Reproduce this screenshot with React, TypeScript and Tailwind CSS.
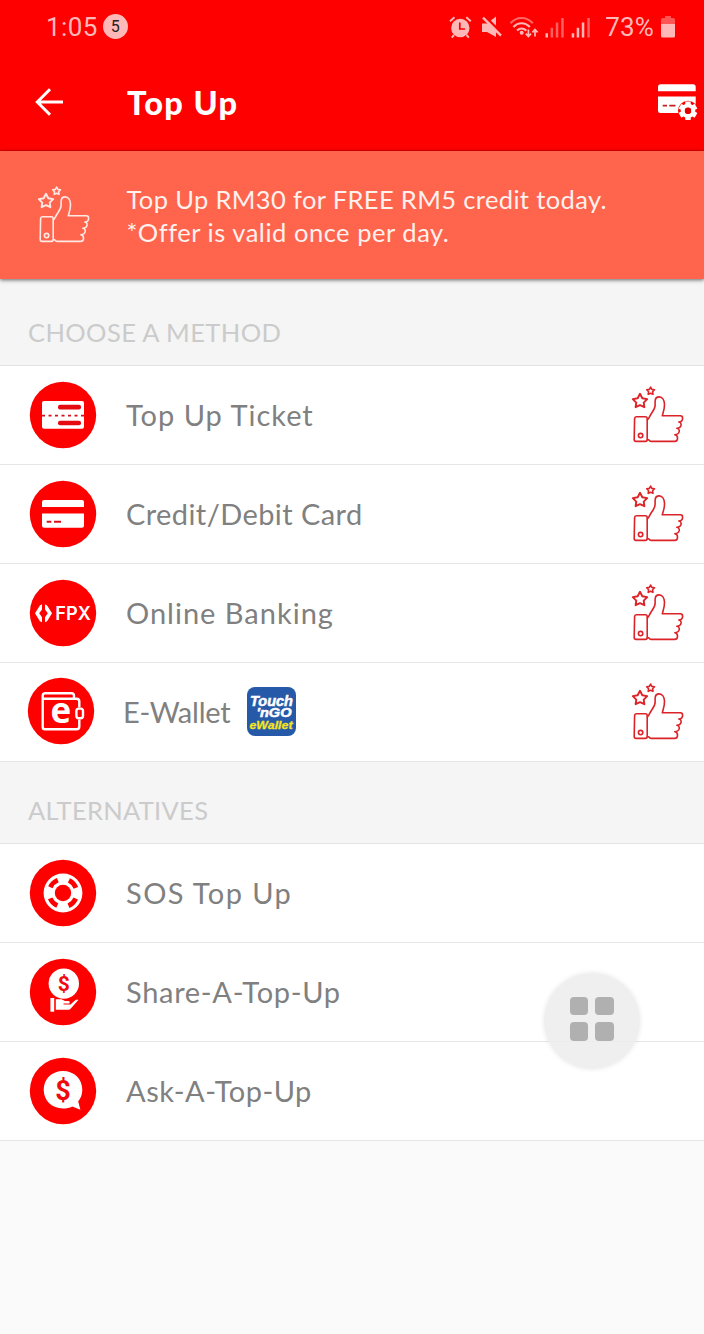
import type { ReactNode } from 'react';
import clsx from 'clsx';

type Method = {
  label: string;
  icon: ReactNode;
  tracking: string;
  promo?: boolean;
  wallet?: boolean;
};

function ThumbIcon({ className }: { className?: string }) {
  return (
    <svg viewBox="0 0 56 60" className={clsx('h-[60px] w-14 shrink-0', className)} fill="none" stroke="currentColor" strokeWidth="1.6" strokeLinejoin="round" strokeLinecap="round">
      <path strokeWidth="1.9" d="M10 9.8 12.3 14.3 17.2 15.1 13.7 18.6 14.4 23.2 10 21.1 5.6 23.2 6.3 18.6 2.8 15.1 7.7 14.3Z" />
      <path d="M20.6 3 21.8 5.4 24.5 5.8 22.6 7.7 23 10.4 20.6 9.2 18.2 10.4 18.6 7.7 16.7 5.8 19.4 5.4Z" />
      <path d="M6.3 32.8H15.4Q17.2 32.8 17.2 34.8V55.6Q17.2 57.4 15.4 57.4H6Q4.2 57.4 4.2 55.6L4.6 34.6Q4.7 32.8 6.3 32.8Z" />
      <circle cx="10.6" cy="51.6" r="2.2" />
      <path d="M17.4 35.8C19 34.5 19.3 32.6 21.4 29.5C23.6 26.3 25.1 24.5 25.1 21.5V17.5C25.1 14.5 26.8 12.9 29.3 12.9C32.3 12.9 34.2 16.3 34.5 20C34.8 24.5 33.3 28 32.3 31.8H50.4Q52.6 31.8 52.6 34.2C52.6 36.5 51.4 37.8 48.8 38C52.2 38.5 52.2 44 46.8 44.3C50.3 44.6 50.5 50.4 44.8 50.7C48.4 51.1 48.5 57.4 44.7 57.4H20.9Q19.5 57.2 18.9 55.9L17.5 55.4" />
    </svg>
  );
}

function Disc({ children }: { children: ReactNode }) {
  return (
    <svg viewBox="0 0 68 68" className="h-[68px] w-[68px] shrink-0" fill="white">
      <circle cx="34" cy="34" r="33.2" fill="#ff0000" />
      {children}
    </svg>
  );
}

const ticket = (
  <Disc>
    <rect x="13" y="20" width="42" height="27.7" rx="2" />
    <g fill="#e60b10">
      <rect x="29" y="23.8" width="23" height="4.6" rx="2" />
      <rect x="29" y="39.7" width="23" height="4.6" rx="2" />
    </g>
    <path d="M13 34.7H55" stroke="#d8101a" strokeWidth="1.8" strokeDasharray="3 3.5" />
  </Disc>
);

const card = (
  <Disc>
    <path d="M13 27V22Q13 20 15 20H53Q55 20 55 22V27Z" />
    <path d="M13 33.4H55V45.7Q55 47.7 53 47.7H15Q13 47.7 13 45.7Z" />
    <path d="M17.7 41.8H22.3M25 41.8H32" stroke="#d8101a" strokeWidth="2" />
  </Disc>
);

const fpx = (
  <Disc>
    <path d="M13 25.3V30.4L10.2 34.3 13 38.2V43.3L10.9 42.2 6 34.3 10.9 26.4Z" />
    <path d="M16 25.3V30.4L18.8 34.3 16 38.2V43.3L18.1 42.2 23 34.3 18.1 26.4Z" />
    <text x="26.3" y="41.4" fontSize="18.5" fontWeight="600" textLength="35.5" lengthAdjust="spacingAndGlyphs" className="font-['Inter',sans-serif]">FPX</text>
  </Disc>
);

const ewallet = (
  <Disc>
    <g fill="none" stroke="white" strokeWidth="2.4" strokeLinejoin="round">
      <path d="M15.7 21.7V50Q15.7 52.3 18 52.3H49.5Q52.3 52.3 52.3 49.5V42.5M52.3 30.5V24.5Q52.3 21.7 49.5 21.7H15.7V18.8Q15.7 16.2 18.3 16.2H44.5Q47 16.2 47 18.8V21.7" />
      <rect x="49.4" y="31.6" width="6.6" height="9.6" rx="2.4" />
    </g>
    <text x="33.8" y="46.2" fontSize="35" fontWeight="700" textAnchor="middle" className="font-['Open_Sans',sans-serif]">e</text>
  </Disc>
);

const sos = (
  <Disc>
    <circle cx="34" cy="34" r="19.4" />
    <circle cx="34" cy="34" r="8.2" fill="#ff0000" />
    <circle cx="34" cy="34" r="13.9" fill="none" stroke="#ff0000" strokeWidth="4.8" strokeDasharray="10.4 11.434" transform="rotate(23.6 34 34)" />
  </Disc>
);

const share = (
  <Disc>
    <circle cx="34.8" cy="25.6" r="15.2" />
    <text x="34.8" y="32.9" fontSize="21" fontWeight="700" textAnchor="middle" fill="#ee0a0e" className="font-['Roboto',sans-serif]">$</text>
    <path d="M21.4 40H25.2V53.7H21.4Z" />
    <path d="M26.8 41.2H32.5L36 43H40Q41.6 44 40.2 45.5H34.5V46.5H41.5L46.6 42Q48.4 40.9 49.3 42L41.8 50.6Q40.8 51.8 39.3 51.8H26.8Z" />
  </Disc>
);

const ask = (
  <Disc>
    <path d="M34 14C45 14 53.3 22 53.3 32.8C53.3 38 51.5 41.5 49.2 44.5L51.4 52.8L43.3 49.4C40.5 50.8 37.5 51.5 34 51.5C23 51.5 14.7 43.6 14.7 32.8C14.7 22 23 14 34 14Z" />
    <text x="34" y="43" fontSize="27" fontWeight="700" textAnchor="middle" fill="#ee0a0e" className="font-['Roboto',sans-serif]">$</text>
  </Disc>
);

const methods: Method[] = [
  { label: 'Top Up Ticket', icon: ticket, tracking: 'tracking-[1px]', promo: true },
  { label: 'Credit/Debit Card', icon: card, tracking: 'tracking-[0.42px]', promo: true },
  { label: 'Online Banking', icon: fpx, tracking: 'tracking-[1px]', promo: true },
  { label: 'E-Wallet', icon: ewallet, tracking: 'tracking-[-0.2px]', promo: true, wallet: true },
];

const alternatives: Method[] = [
  { label: 'SOS Top Up', icon: sos, tracking: 'tracking-[1.4px]' },
  { label: 'Share-A-Top-Up', icon: share, tracking: 'tracking-[0.7px]' },
  { label: 'Ask-A-Top-Up', icon: ask, tracking: 'tracking-[0.5px]' },
];

function TouchNGoBadge() {
  return (
    <svg viewBox="0 0 49 49" className="-mt-px ml-4 h-[49px] w-[49px] shrink-0 font-['Liberation_Sans',sans-serif]" fontStyle="italic" fontWeight="700">
      <rect width="49" height="49" rx="8" fill="#265aa9" />
      <g fill="white" stroke="white" strokeWidth="0.5">
        <text x="3" y="18.8" fontSize="14.5" textLength="43" lengthAdjust="spacingAndGlyphs">Touch</text>
        <text x="9.5" y="30" fontSize="12.5" textLength="35" lengthAdjust="spacingAndGlyphs">'nGO</text>
      </g>
      <text x="2.5" y="42.3" fontSize="10.5" fill="#f6e51c" stroke="#f6e51c" strokeWidth="0.3" textLength="43" lengthAdjust="spacingAndGlyphs">eWallet</text>
    </svg>
  );
}

function StatusIcons() {
  return (
    <svg viewBox="0 0 144 30" className="h-[30px] w-36" fill="#ffb8b8">
      {/* alarm */}
      <circle cx="12.3" cy="16" r="9.2" />
      <path d="M6 23 3.8 25.6M18.6 23 20.8 25.6M2 9.2 6.5 5.3M22.8 9.2 18.3 5.3" stroke="#ffb8b8" strokeWidth="2" />
      <path d="M11.8 10.5V17H17" stroke="#ff0000" strokeWidth="1.7" fill="none" />
      {/* muted speaker */}
      <path d="M34 11.5H39L48 4.5V25L39 20H34Z" />
      <path d="M37 4.6 55.5 23" stroke="#ff0000" strokeWidth="2.6" />
      <path d="M35 5.6 53 23.6" stroke="#ffb8b8" strokeWidth="2.4" />
      {/* wifi */}
      <g fill="none" strokeWidth="2.1">
        <path d="M62.5 11.3C68.5 4.2 78.5 4.2 84.8 11.3" stroke="#ff6868" />
        <path d="M65.5 15C70 10 77 10 81.8 15M69 18.6C72 15.8 75.2 15.8 78.4 18.6" stroke="#ffb8b8" />
      </g>
      <circle cx="73.7" cy="20.8" r="2" />
      <path d="M80.4 17.5V24M77.8 21.7 80.4 24.5 83 21.7M87 24.5V18M84.4 20.3 87 17.5 89.6 20.3" fill="none" stroke="#ffb8b8" strokeWidth="1.7" />
      {/* signal bars */}
      <path d="M97.5 21.2h2.5v4.3h-2.5zM123.7 21.2h2.5v4.3h-2.5zM128.7 15.8h2.5v9.7h-2.5zM133.8 10.5h2.5v15h-2.5z" />
      <path d="M102.6 15.8h2.5v9.7h-2.5zM107.8 10.5h2.5v15h-2.5zM113.2 6h2.5v19.5h-2.5zM139.3 6h2.5v19.5h-2.5z" fill="#ff6060" />
    </svg>
  );
}

function CardSettingsIcon() {
  return (
    <svg viewBox="0 0 42 38" className="-mt-[2px] h-[38px] w-[42px]" fill="white">
      <path d="M1 9.2V5Q1 2.3 3.7 2.3H36Q38.7 2.3 38.7 5V9.2Z" />
      <path d="M1 14.6H38.7V31H3.5Q1 31 1 28.5Z" />
      <path d="M5.7 23.7H10M12.3 23.7H18.5" stroke="#c82020" strokeWidth="1.7" />
      <path d="M24 31H20V33H38V38H42V22H39V31Z" fill="#ff0000" />
      <circle cx="31" cy="28.8" r="10" fill="#ff0000" />
      <circle cx="31" cy="28.8" r="5.2" fill="none" stroke="white" strokeWidth="4.2" />
      <g stroke="white" strokeWidth="5.4">
        <path d="M31 19.6V24M31 33.6V38M23 24.2 26.8 26.4M35.2 31.2 39 33.4M23 33.4 26.8 31.2M35.2 26.4 39 24.2" />
      </g>
      <circle cx="31" cy="28.8" r="3.2" fill="#e00000" />
    </svg>
  );
}

function SectionTitle({ children, className }: { children: ReactNode; className: string }) {
  return (
    <h2 className={clsx('flex items-end border-b border-[#e3e3e3] bg-[#f5f5f5] pb-[17px] pl-7 text-[25.5px] leading-8 text-[#cbcbcb]', className)}>
      {children}
    </h2>
  );
}

function MethodRow({ method }: { method: Method }) {
  return (
    <li className={clsx('flex h-[99px] items-center border-b border-[#e6e6e6] bg-white pr-[18px]', method.wallet ? 'pl-[27px]' : 'pl-[29px]')}>
      <div className={clsx(method.wallet && '-mt-[2px]')}>{method.icon}</div>
      <span className={clsx('whitespace-nowrap text-[29px] leading-9 text-[#808080]', method.wallet ? 'ml-7' : 'ml-[29px]', method.tracking)}>
        {method.label}
      </span>
      {method.wallet && <TouchNGoBadge />}
      {method.promo && <ThumbIcon className="-mt-[3px] ml-auto text-[#dc2328]" />}
    </li>
  );
}

export default function App() {
  return (
    <div className="relative h-[1334px] w-[704px] overflow-hidden bg-[#fafafa] font-['Lato',sans-serif]">
      <header className="h-[151px] border-b border-[#e80000] bg-[#ff0000]">
        <div className="flex h-[54px] items-center pl-[46px] pr-[29px] font-['Roboto',sans-serif] text-[26px] text-[#ffb8b8]">
          <span className="pt-px tracking-[0.4px]">1:05</span>
          <span className="-mt-px ml-[5px] flex h-[25px] w-[25px] items-center justify-center rounded-full bg-[#ffb8b8] text-[16px] text-[#222]">5</span>
          <div className="ml-auto flex items-center">
            <StatusIcons />
            <span className="ml-[13px] pt-px tracking-[0.2px]">73%</span>
            <svg viewBox="0 0 14 22" className="ml-[7px] h-[22px] w-[14px]">
              <path d="M0 9V3.5Q0 2 1.5 2H4V0H10V2H12.5Q14 2 14 3.5V9Z" fill="#ff5555" />
              <path d="M0 8H14V20Q14 21.5 12.5 21.5H1.5Q0 21.5 0 20Z" fill="#ffb8b8" />
            </svg>
          </div>
        </div>
        <div className="flex h-24 items-center pl-[35px] pr-[5px]">
          <svg viewBox="0 0 28 28" className="h-7 w-7" fill="none" stroke="white" strokeWidth="3">
            <path d="M28 14H2.5M15 1.3 2.3 14 15 26.7" />
          </svg>
          <h1 className="ml-16 pt-[2px] text-[32.5px] font-black tracking-[1.4px] text-white">Top Up</h1>
          <div className="ml-auto">
            <CardSettingsIcon />
          </div>
        </div>
      </header>

      <section className="relative flex h-32 items-center bg-[#ff644d] pl-9 shadow-[0_1px_4px_rgba(0,0,0,0.6)]">
        <ThumbIcon className="-mt-[3px] text-[#ffe9e5]" />
        <p className="ml-[34.5px] pt-[2px] text-[25.5px] leading-[33px] text-[#fff1ee]">
          <span className="block whitespace-nowrap tracking-[0.36px]">Top Up RM30 for FREE RM5 credit today.</span>
          <span className="block whitespace-nowrap tracking-[0.53px]">*Offer is valid once per day.</span>
        </p>
      </section>

      <SectionTitle className="h-[87px] tracking-[0.4px]">CHOOSE A METHOD</SectionTitle>
      <ul>
        {methods.map((m) => (
          <MethodRow key={m.label} method={m} />
        ))}
      </ul>
      <SectionTitle className="h-[82px] tracking-[0.3px]">ALTERNATIVES</SectionTitle>
      <ul>
        {alternatives.map((m) => (
          <MethodRow key={m.label} method={m} />
        ))}
      </ul>

      {/* floating assistant button */}
      <button className="absolute left-[544px] top-[973px] flex h-24 w-24 items-center justify-center rounded-full bg-[#ececec]/85 pb-[5px] pr-px shadow-[0_0_5px_rgba(0,0,0,0.1)]">
        <span className="grid grid-cols-2 gap-[7px]">
          <i className="h-[18.5px] w-[18.5px] rounded bg-[#b0b0b0]" />
          <i className="h-[18.5px] w-[18.5px] rounded bg-[#b0b0b0]" />
          <i className="h-[18.5px] w-[18.5px] rounded bg-[#b0b0b0]" />
          <i className="h-[18.5px] w-[18.5px] rounded bg-[#b0b0b0]" />
        </span>
      </button>
    </div>
  );
}
